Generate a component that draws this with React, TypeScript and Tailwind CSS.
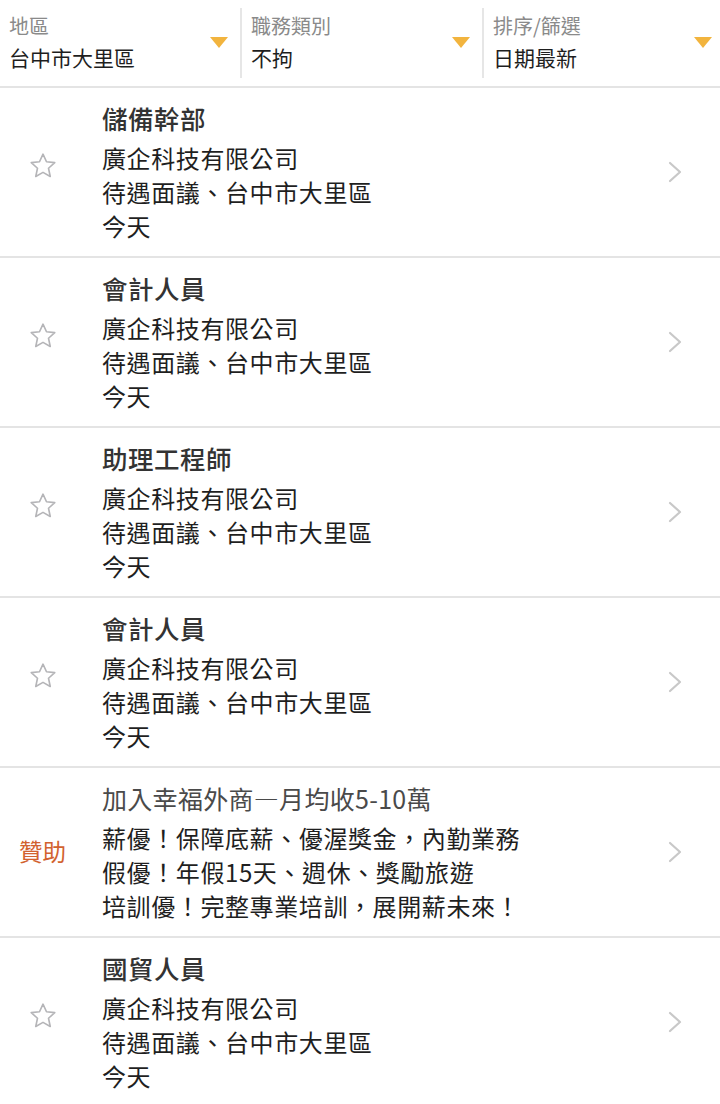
import React from "react";

const font = { fontFamily: '"Noto Sans CJK TC", "Noto Sans", sans-serif' };

function Tri() {
  return (
    <svg width="18" height="11" viewBox="0 0 18 11" className="shrink-0">
      <polygon points="0,0 18,0 9,11" fill="#F2B43E" />
    </svg>
  );
}

function Star() {
  return (
    <svg width="30" height="30" viewBox="0 0 24 24" fill="none" stroke="#b5b5b8" strokeWidth="1.3" strokeLinejoin="round">
      <polygon points="12,2.5 14.8,8.6 21.4,9.3 16.4,13.8 17.8,20.4 12,17.1 6.2,20.4 7.6,13.8 2.6,9.3 9.2,8.6" />
    </svg>
  );
}

function Chevron() {
  return (
    <svg width="16" height="24" viewBox="0 0 16 24" fill="none" stroke="#c8c8c8" strokeWidth="2.2" strokeLinecap="round" strokeLinejoin="round">
      <polyline points="4,3 14,12 4,21" />
    </svg>
  );
}

function Filter({ label, value, divider, pr }: { label: string; value: string; divider?: boolean; pr: string }) {
  return (
    <div className={"flex-1 flex items-center " + pr + " " + (divider ? "border-l-2 border-[#e6e6e6]" : "")}>
      <div className="flex-1 flex flex-col pl-[9px]">
        <div className="text-[20px] leading-[28px] text-[#8a8a8a]">{label}</div>
        <div className="text-[21px] leading-[34px] text-[#1e1e1e]">{value}</div>
      </div>
      <div className="pb-[2px]">
        <Tri />
      </div>
    </div>
  );
}

type Job = { title: string; lines: string[]; sponsor?: boolean };

const jobs: Job[] = [
  { title: "儲備幹部", lines: ["廣企科技有限公司", "待遇面議、台中市大里區", "今天"] },
  { title: "會計人員", lines: ["廣企科技有限公司", "待遇面議、台中市大里區", "今天"] },
  { title: "助理工程師", lines: ["廣企科技有限公司", "待遇面議、台中市大里區", "今天"] },
  { title: "會計人員", lines: ["廣企科技有限公司", "待遇面議、台中市大里區", "今天"] },
  {
    title: "加入幸福外商―月均收5-10萬",
    lines: ["薪優！保障底薪、優渥獎金，內勤業務", "假優！年假15天、週休、獎勵旅遊", "培訓優！完整專業培訓，展開薪未來！"],
    sponsor: true,
  },
  { title: "國貿人員", lines: ["廣企科技有限公司", "待遇面議、台中市大里區", "今天"] },
];

function Row({ job }: { job: Job }) {
  return (
    <div className="flex items-center border-b-2 border-[#e4e4e4] h-[170px]">
      <div className="w-[102px] shrink-0 flex justify-start">
        {job.sponsor ? (
          <span className="text-[23.5px] text-[#d2622f] pl-[19px]">贊助</span>
        ) : (
          <span className="pl-[28px] pb-[12px]">
            <Star />
          </span>
        )}
      </div>
      <div className="flex-1 flex flex-col">
        <div
          className={
            "leading-[34px] mb-[6px] " +
            (job.sponsor
              ? "text-[25px] text-[#4a4a4a] font-normal tracking-[0.3px]"
              : "text-[25.5px] text-[#333333] font-medium tracking-[0.5px]")
          }
        >
          {job.title}
        </div>
        {job.lines.map((l, i) => (
          <div key={i} className="text-[24px] leading-[34px] text-[#1f1f1f] tracking-[0.6px]">
            {l}
          </div>
        ))}
      </div>
      <div className="w-[60px] shrink-0 flex justify-start pl-[6px]">
        <Chevron />
      </div>
    </div>
  );
}

export default function App() {
  return (
    <div className="w-[720px] h-[1104px] bg-white overflow-hidden" style={font}>
      <div className="flex h-[88px] border-b-2 border-[#e4e4e4] py-[8px]">
        <Filter label="地區" value="台中市大里區" pr="pr-[12px]" />
        <Filter label="職務類別" value="不拘" divider pr="pr-[12px]" />
        <Filter label="排序/篩選" value="日期最新" divider pr="pr-[8px]" />
      </div>
      {jobs.map((j, i) => (
        <Row key={i} job={j} />
      ))}
    </div>
  );
}
